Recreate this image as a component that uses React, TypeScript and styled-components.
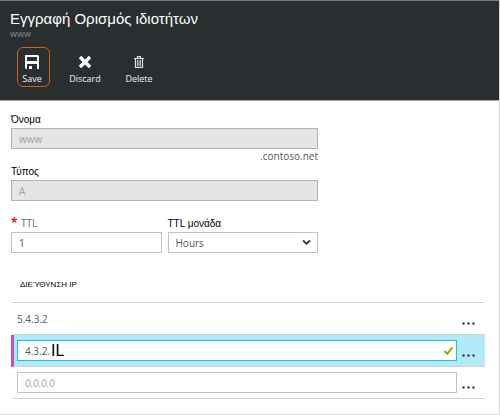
import React, { useState } from "react";
import styled, { createGlobalStyle } from "styled-components";

const latin = '"Open Sans", "Noto Sans", sans-serif';
const greek = '"Liberation Sans", Arial, sans-serif';

const GlobalStyle = createGlobalStyle`
  *, *::before, *::after { box-sizing: border-box; }
  body { margin: 0; background: #fff; font-family: ${latin}; color: #53565c; }
  button, input, select { font-family: inherit; color: inherit; margin: 0; }
`;

const Blade = styled.main`
  border-right: 1px solid #d9d9d9;
  border-bottom: 1px solid #d9d9d9;
  padding-bottom: 15px;
`;

const Header = styled.header`
  background: #292e31;
  border-top: 1px solid #74797c;
  border-bottom: 1px solid #9aa9b3;
  padding: 9px 10px 13px;
  color: #fff;
`;

const Title = styled.h1`
  margin: 0;
  font: 400 15px/18px ${greek};
`;

const Subtitle = styled.p`
  margin: 0;
  font-size: 9px;
  line-height: 12px;
  color: #8d9194;
`;

const Toolbar = styled.div`
  display: flex;
  gap: 16px;
  margin-top: 7px;
  padding-left: 7px;
`;

const ToolButton = styled.button<{ $outlined?: boolean }>`
  display: flex;
  flex-direction: column;
  align-items: center;
  width: ${(p) => (p.$outlined ? "33px" : "38px")};
  height: 40px;
  padding: ${(p) => (p.$outlined ? "6px 3px 0 0" : "6px 0 0")};
  background: none;
  border: 1px solid ${(p) => (p.$outlined ? "#d35f10" : "transparent")};
  border-radius: 6px;
  font-size: 9px;
  line-height: 12px;
  color: #f2f2f2;

  svg { display: block; margin-bottom: 4px; flex: none; }
`;

const Form = styled.form`
  padding: 11px 14px 0 11px;
`;

const Fields = styled.div`
  width: 100%;
  max-width: 307px;
`;

const Field = styled.div`
  flex: 1;
  min-width: 0;
`;

const Label = styled.label`
  display: block;
  font: 400 10px/16px ${greek};
  color: #000;
`;

const LatinLabel = styled(Label)`
  display: flex;
  font: 400 10px/14px ${latin};
  padding-bottom: 2px;
  color: #66696e;
`;

const Required = styled.span`
  width: 10px;
  font: 700 12px/14px ${latin};
  color: #e81123;
`;

const TextInput = styled.input`
  display: block;
  width: 100%;
  height: 21px;
  padding: 0 7px;
  border: 1px solid #c3c3c3;
  border-radius: 0;
  background: #fff;
  font-size: 10px;
  outline: none;

  &:disabled {
    border-color: #b3b3b3;
    background: #e5e5e5;
    color: #a2a2a2;
  }
  &::placeholder {
    color: #a2a2a2;
    font-style: italic;
    opacity: 1;
  }
`;

const Suffix = styled.p`
  margin: 0;
  text-align: right;
  font-size: 10px;
  line-height: 15px;
`;

const Pair = styled.div`
  display: flex;
  gap: 6px;
  margin-top: 15px;
`;

const SelectBox = styled.div`
  display: grid;
  align-items: center;

  & > * { grid-area: 1 / 1; }
  svg { justify-self: end; margin-right: 7px; pointer-events: none; }
`;

const Select = styled.select`
  appearance: none;
  width: 100%;
  height: 21px;
  padding: 0 7px;
  border: 1px solid #c3c3c3;
  border-radius: 0;
  background: #fff;
  font-size: 10px;
  outline: none;
`;

const Records = styled.table`
  width: 100%;
  margin-top: 22px;
  border-collapse: separate;
  border-spacing: 0;
`;

const HeadCell = styled.th`
  height: 28px;
  padding: 0 0 8px 9px;
  border-bottom: 1px solid #d9d9d9;
  text-align: left;
  font: 400 8px/12px ${greek};
  color: #000;
`;

const Row = styled.tr<{ $active?: boolean }>`
  background: ${(p) => (p.$active ? "#b2eaf9" : "transparent")};

  & > td:first-child {
    border-left: 3px solid ${(p) => (p.$active ? "#c14bd9" : "transparent")};
  }
`;

const Cell = styled.td`
  height: 32px;
  padding: 0 0 0 3px;
  border-bottom: 1px solid #d3d3d3;
  font-size: 10px;
`;

const MenuCell = styled(Cell)`
  width: 28px;
  padding: 10px 0 0 4px;
`;

const MenuButton = styled.button`
  display: block;
  padding: 3px 1px;
  border: 0;
  background: none;

  svg { display: block; }
`;

const Editor = styled.div`
  display: flex;
  align-items: center;
  height: 21px;
  padding: 0 2px 0 7px;
  border: 1px solid #1fbcf0;
  background: #fff;

  svg { margin-left: auto; flex: none; }
`;

const EditorInput = styled.input`
  width: 26px;
  padding: 0;
  border: 0;
  background: none;
  font-size: 10px;
  outline: none;
`;

const Typed = styled.span`
  font: 400 16px/19px ${greek};
  color: #000;
`;

const SaveIcon = () => (
  <svg width="16" height="15" viewBox="0 0 16 15" aria-hidden="true">
    <path
      fill="#fff"
      fillRule="evenodd"
      d="M1 1H14L15 2V15H13V10H3V15H2L1 14ZM3 3V7H13V3Z"
    />
    <path fill="#fff" d="M5 12H8V15H5Z" />
  </svg>
);

const DiscardIcon = () => (
  <svg width="14" height="15" viewBox="0 0 14 15" aria-hidden="true">
    <path d="M2 3L12 13M12 3L2 13" stroke="#fff" strokeWidth="3.4" />
  </svg>
);

const DeleteIcon = () => (
  <svg width="10" height="15" viewBox="0 0 10 15" aria-hidden="true">
    <path
      d="M0 4.5H10M3.5 4V2.5H6.5V4M1.5 5V13.5H8.5V5M3.8 6V12.5M6.2 6V12.5"
      fill="none"
      stroke="#e6e6e6"
      strokeWidth="1.2"
    />
  </svg>
);

const ChevronIcon = () => (
  <svg width="9" height="7" viewBox="0 0 9 7" aria-hidden="true">
    <path d="M1 1.5L4.5 4.7L8 1.5" fill="none" stroke="#33363a" strokeWidth="2" />
  </svg>
);

const CheckIcon = () => (
  <svg width="11" height="10" viewBox="0 0 11 10" aria-hidden="true">
    <path d="M1.5 5L4.3 7.7L9.4 1.5" fill="none" stroke="#7fba00" strokeWidth="2" />
  </svg>
);

const RowMenu = ({ label }: { label: string }) => (
  <MenuButton type="button" aria-label={label}>
    <svg width="13" height="3" viewBox="0 0 13 3" aria-hidden="true">
      <g fill="#393c42">
        <circle cx="1.5" cy="1.5" r="1.2" />
        <circle cx="6.5" cy="1.5" r="1.2" />
        <circle cx="11.5" cy="1.5" r="1.2" />
      </g>
    </svg>
  </MenuButton>
);

export default function App() {
  const [ttl, setTtl] = useState("1");
  const [address, setAddress] = useState("4.3.2.");

  return (
    <>
      <GlobalStyle />
      <Blade>
        <Header>
          <Title>Εγγραφή Ορισμός ιδιοτήτων</Title>
          <Subtitle>www</Subtitle>
          <Toolbar>
            <ToolButton type="submit" form="record" $outlined>
              <SaveIcon />
              <span>Save</span>
            </ToolButton>
            <ToolButton type="button">
              <DiscardIcon />
              <span>Discard</span>
            </ToolButton>
            <ToolButton type="button">
              <DeleteIcon />
              <span>Delete</span>
            </ToolButton>
          </Toolbar>
        </Header>

        <Form id="record" onSubmit={(e) => e.preventDefault()}>
          <Fields>
            <Field>
              <Label htmlFor="name">Όνομα</Label>
              <TextInput id="name" value="www" disabled readOnly />
              <Suffix>.contoso.net</Suffix>
            </Field>
            <Field>
              <Label htmlFor="type">Τύπος</Label>
              <TextInput id="type" value="A" disabled readOnly />
            </Field>
            <Pair>
              <Field>
                <LatinLabel htmlFor="ttl">
                  <Required>*</Required>TTL
                </LatinLabel>
                <TextInput id="ttl" value={ttl} onChange={(e) => setTtl(e.target.value)} />
              </Field>
              <Field>
                <Label htmlFor="unit">TTL μονάδα</Label>
                <SelectBox>
                  <Select id="unit" defaultValue="Hours">
                    <option>Hours</option>
                  </Select>
                  <ChevronIcon />
                </SelectBox>
              </Field>
            </Pair>
          </Fields>

          <Records>
            <thead>
              <tr>
                <HeadCell colSpan={2}>ΔΙΕΎΘΥΝΣΗ IP</HeadCell>
              </tr>
            </thead>
            <tbody>
              <Row>
                <Cell>5.4.3.2</Cell>
                <MenuCell><RowMenu label="5.4.3.2" /></MenuCell>
              </Row>
              <Row $active>
                <Cell>
                  <Editor>
                    <EditorInput
                      aria-label="IP"
                      value={address}
                      onChange={(e) => setAddress(e.target.value)}
                    />
                    <Typed>IL</Typed>
                    <CheckIcon />
                  </Editor>
                </Cell>
                <MenuCell><RowMenu label="4.3.2." /></MenuCell>
              </Row>
              <Row>
                <Cell><TextInput aria-label="IP" placeholder="0.0.0.0" /></Cell>
                <MenuCell><RowMenu label="0.0.0.0" /></MenuCell>
              </Row>
            </tbody>
          </Records>
        </Form>
      </Blade>
    </>
  );
}
